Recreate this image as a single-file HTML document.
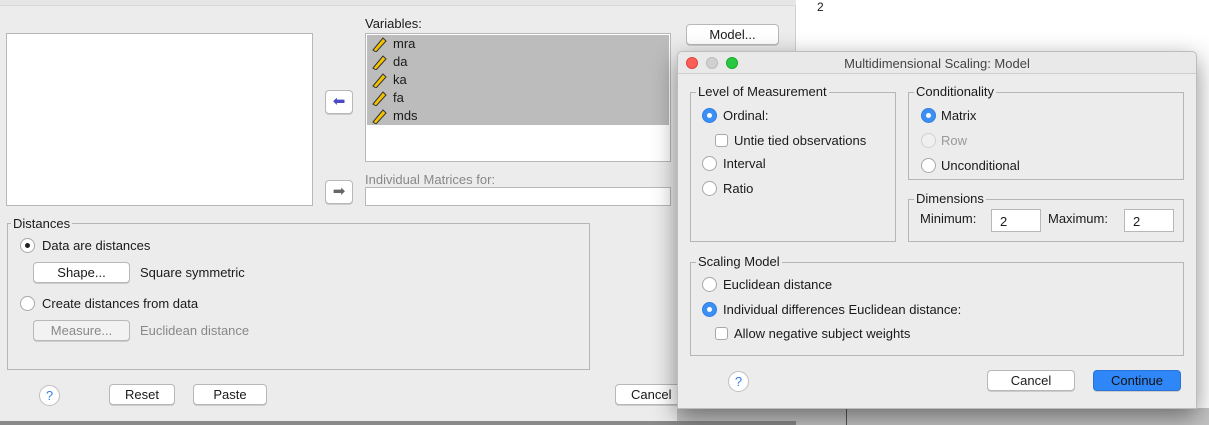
<!DOCTYPE html>
<html><head><style>
*{box-sizing:border-box;margin:0;padding:0}
body{width:1209px;height:425px;position:relative;overflow:hidden;background:#fff;font-family:"Liberation Sans",sans-serif;font-size:13px;color:#1a1a1a}
.a{position:absolute}
.main{left:0;top:0;width:796px;height:421px;background:#ececec;border-right:1px solid #d0d0d0}
.box{background:#fff;border:1px solid #b8b8b8}
.grp{border:1px solid #b5b5b5}
.lg{position:absolute;top:-9px;left:6px;background:#ececec;padding:0 2px;font-size:13px}
.btn{position:absolute;background:#fff;border:1px solid #b8b8b8;border-radius:4px;text-align:center;font-size:13px;line-height:19px;height:21px;box-shadow:0 1px 0 #ccc}
.rad{position:absolute;width:15px;height:15px;border-radius:50%;background:#fff;border:1px solid #a8a8a8}
.rad.on{background:#3b8ff5;border-color:#2f7fe0}
.rad.on::after{content:"";position:absolute;left:4px;top:4px;width:5px;height:5px;border-radius:50%;background:#fff}
.chk{position:absolute;width:13px;height:13px;border:1px solid #a8a8a8;border-radius:3px;background:#fff}
.t{position:absolute;white-space:nowrap}
.help{position:absolute;width:21px;height:21px;border-radius:50%;background:#fff;border:1px solid #c0c0c0;color:#3b7fe0;text-align:center;line-height:19px;font-size:13px}
.var{height:18px;line-height:18px;padding-left:26px;position:relative}
.var svg{position:absolute;left:4px;top:1px}
</style></head><body>
<div class="a main">
  <div class="a" style="left:0;top:0;width:796px;height:6px;border-bottom:1px solid #d8d8d8;background:#e6e6e6"></div>
  <div class="a box" style="left:6px;top:33px;width:307px;height:173px"></div>
  <div class="t" style="left:365px;top:16px">Variables:</div>
  <div class="a box" style="left:365px;top:33px;width:306px;height:129px">
    <div style="background:#bcbcbc;margin:1px;height:90px">
      <div class="var"><svg width="16" height="16"><path d="M2 14 L12 2 L15 5 L5 16 Z" fill="#f2c200" stroke="#333" stroke-width="1"/></svg>mra</div>
      <div class="var"><svg width="16" height="16"><path d="M2 14 L12 2 L15 5 L5 16 Z" fill="#f2c200" stroke="#333" stroke-width="1"/></svg>da</div>
      <div class="var"><svg width="16" height="16"><path d="M2 14 L12 2 L15 5 L5 16 Z" fill="#f2c200" stroke="#333" stroke-width="1"/></svg>ka</div>
      <div class="var"><svg width="16" height="16"><path d="M2 14 L12 2 L15 5 L5 16 Z" fill="#f2c200" stroke="#333" stroke-width="1"/></svg>fa</div>
      <div class="var"><svg width="16" height="16"><path d="M2 14 L12 2 L15 5 L5 16 Z" fill="#f2c200" stroke="#333" stroke-width="1"/></svg>mds</div>
    </div>
  </div>
  <div class="btn" style="left:325px;top:90px;width:28px;height:24px;line-height:22px;color:#4a4ac8;font-size:15px">&#x2B05;</div>
  <div class="btn" style="left:325px;top:180px;width:28px;height:24px;line-height:22px;color:#666;font-size:15px">&#x27A1;</div>
  <div class="t" style="left:365px;top:172px;color:#888">Individual Matrices for:</div>
  <div class="a box" style="left:365px;top:187px;width:306px;height:19px"></div>
  <div class="btn" style="left:686px;top:24px;width:93px">Model...</div>

  <div class="a grp" style="left:7px;top:223px;width:583px;height:147px"><span class="lg" style="top:-8px;left:3px">Distances</span></div>
  <div class="rad" style="left:20px;top:238px;background:#fff"><span style="position:absolute;left:4px;top:4px;width:5px;height:5px;border-radius:50%;background:#222"></span></div>
  <div class="t" style="left:42px;top:238px">Data are distances</div>
  <div class="btn" style="left:33px;top:262px;width:97px">Shape...</div>
  <div class="t" style="left:140px;top:265px">Square symmetric</div>
  <div class="rad" style="left:20px;top:296px"></div>
  <div class="t" style="left:42px;top:296px">Create distances from data</div>
  <div class="btn" style="left:33px;top:320px;width:97px;color:#888;background:#f2f2f2">Measure...</div>
  <div class="t" style="left:140px;top:323px;color:#888">Euclidean distance</div>
  <div class="help" style="left:39px;top:385px">?</div>
  <div class="btn" style="left:109px;top:384px;width:66px">Reset</div>
  <div class="btn" style="left:193px;top:384px;width:74px">Paste</div>
  <div class="btn" style="left:615px;top:384px;width:70px;text-align:left;padding-left:15px">Cancel</div>
</div>
<div class="t" style="left:817px;top:0px;font-size:12px">2</div>
<div class="a" style="left:677px;top:408px;width:532px;height:17px;background:#c4c4c4"></div>
<div class="a" style="left:846px;top:408px;width:1px;height:17px;background:#555"></div>
<div class="a" style="left:0;top:421px;width:796px;height:4px;background:#8a8a8a"></div>

<div class="a" style="left:677px;top:51px;width:520px;height:358px;background:#ececec;border:1px solid #bdbdbd;border-radius:5px 5px 0 0;box-shadow:0 8px 25px rgba(0,0,0,.45)">
  <div class="a" style="left:0;top:0;width:518px;height:22px;border-bottom:1px solid #cfcfcf;background:#e9e9e9;border-radius:5px 5px 0 0"></div>
  <div class="a" style="left:8px;top:5px;width:12px;height:12px;border-radius:50%;background:#fc5f57;border:1px solid #e0443e"></div>
  <div class="a" style="left:28px;top:5px;width:12px;height:12px;border-radius:50%;background:#d0d0d0;border:1px solid #bbb"></div>
  <div class="a" style="left:48px;top:5px;width:12px;height:12px;border-radius:50%;background:#2ac840;border:1px solid #1aab29"></div>
  <div class="t" style="left:0;width:518px;text-align:center;top:4px;color:#444">Multidimensional Scaling: Model</div>

  <div class="a grp" style="left:12px;top:40px;width:206px;height:150px"><span class="lg" style="top:-9px;left:5px">Level of Measurement</span></div>
  <div class="rad on" style="left:24px;top:56px"></div><div class="t" style="left:45px;top:56px">Ordinal:</div>
  <div class="chk" style="left:37px;top:82px"></div><div class="t" style="left:56px;top:81px">Untie tied observations</div>
  <div class="rad" style="left:24px;top:104px"></div><div class="t" style="left:45px;top:104px">Interval</div>
  <div class="rad" style="left:24px;top:129px"></div><div class="t" style="left:45px;top:129px">Ratio</div>

  <div class="a grp" style="left:230px;top:40px;width:276px;height:88px"><span class="lg" style="top:-9px;left:5px">Conditionality</span></div>
  <div class="rad on" style="left:243px;top:56px"></div><div class="t" style="left:263px;top:56px">Matrix</div>
  <div class="rad" style="left:243px;top:81px;border-color:#d0d0d0;background:#f0f0f0"></div><div class="t" style="left:263px;top:81px;color:#999">Row</div>
  <div class="rad" style="left:243px;top:106px"></div><div class="t" style="left:263px;top:106px">Unconditional</div>

  <div class="a grp" style="left:230px;top:147px;width:276px;height:43px"><span class="lg" style="top:-9px;left:5px">Dimensions</span></div>
  <div class="t" style="left:242px;top:159px">Minimum:</div>
  <div class="a box" style="left:313px;top:157px;width:50px;height:23px;padding:4px 8px">2</div>
  <div class="t" style="left:370px;top:159px">Maximum:</div>
  <div class="a box" style="left:446px;top:157px;width:50px;height:23px;padding:4px 8px">2</div>

  <div class="a grp" style="left:12px;top:210px;width:494px;height:94px"><span class="lg" style="top:-9px;left:5px">Scaling Model</span></div>
  <div class="rad" style="left:24px;top:225px"></div><div class="t" style="left:45px;top:225px">Euclidean distance</div>
  <div class="rad on" style="left:24px;top:250px"></div><div class="t" style="left:45px;top:250px">Individual differences Euclidean distance:</div>
  <div class="chk" style="left:37px;top:275px"></div><div class="t" style="left:56px;top:274px">Allow negative subject weights</div>

  <div class="help" style="left:50px;top:319px">?</div>
  <div class="btn" style="left:309px;top:318px;width:88px">Cancel</div>
  <div class="btn" style="left:415px;top:318px;width:88px;background:#2f86f6;border-color:#2a73d8;color:#111">Continue</div>
</div>
</body></html>
